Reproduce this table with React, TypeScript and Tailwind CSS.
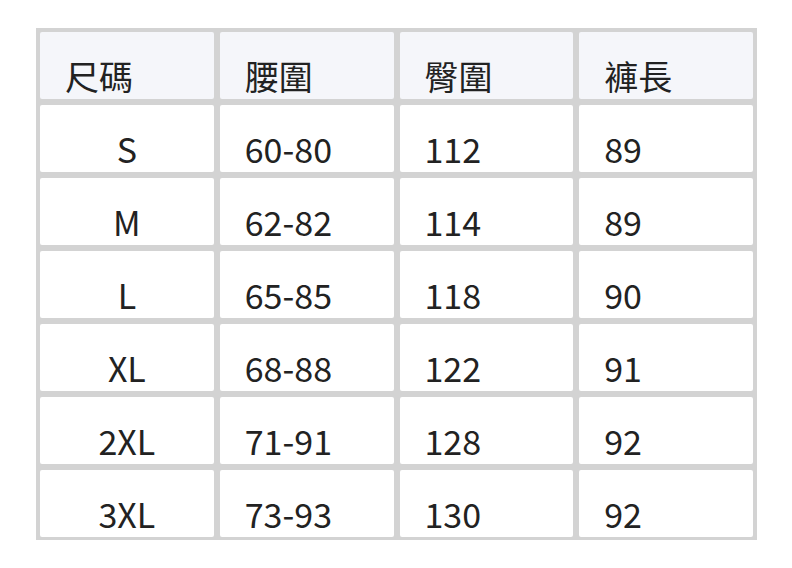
const header = ["尺碼", "腰圍", "臀圍", "褲長"];

const rows = [
  ["S", "60-80", "112", "89"],
  ["M", "62-82", "114", "89"],
  ["L", "65-85", "118", "90"],
  ["XL", "68-88", "122", "91"],
  ["2XL", "71-91", "128", "92"],
  ["3XL", "73-93", "130", "92"],
];

export default function App() {
  return (
    <div
      className="w-[792px] h-[568px] bg-white pt-[28px] pl-[36px]"
      style={{ fontFamily: '"Noto Sans CJK TC", "Noto Sans", sans-serif' }}
    >
      <div className="w-[721px] bg-[#d3d3d3] p-[4px] pb-[3px] grid grid-cols-4 gap-[6px] text-[#222] text-[34px] leading-[34px]">
        {header.map((h) => (
          <div key={h} className="h-[67px] bg-[#f5f6fa] rounded-[2px] pl-[25px] pt-[27px]">
            {h}
          </div>
        ))}
        {rows.map((r) =>
          r.map((c, i) => (
            <div
              key={r[0] + i}
              className={`h-[67px] bg-white rounded-[2px] pt-[27px] ${i === 0 ? "text-center" : "pl-[25px]"}`}
            >
              {c}
            </div>
          ))
        )}
      </div>
    </div>
  );
}
